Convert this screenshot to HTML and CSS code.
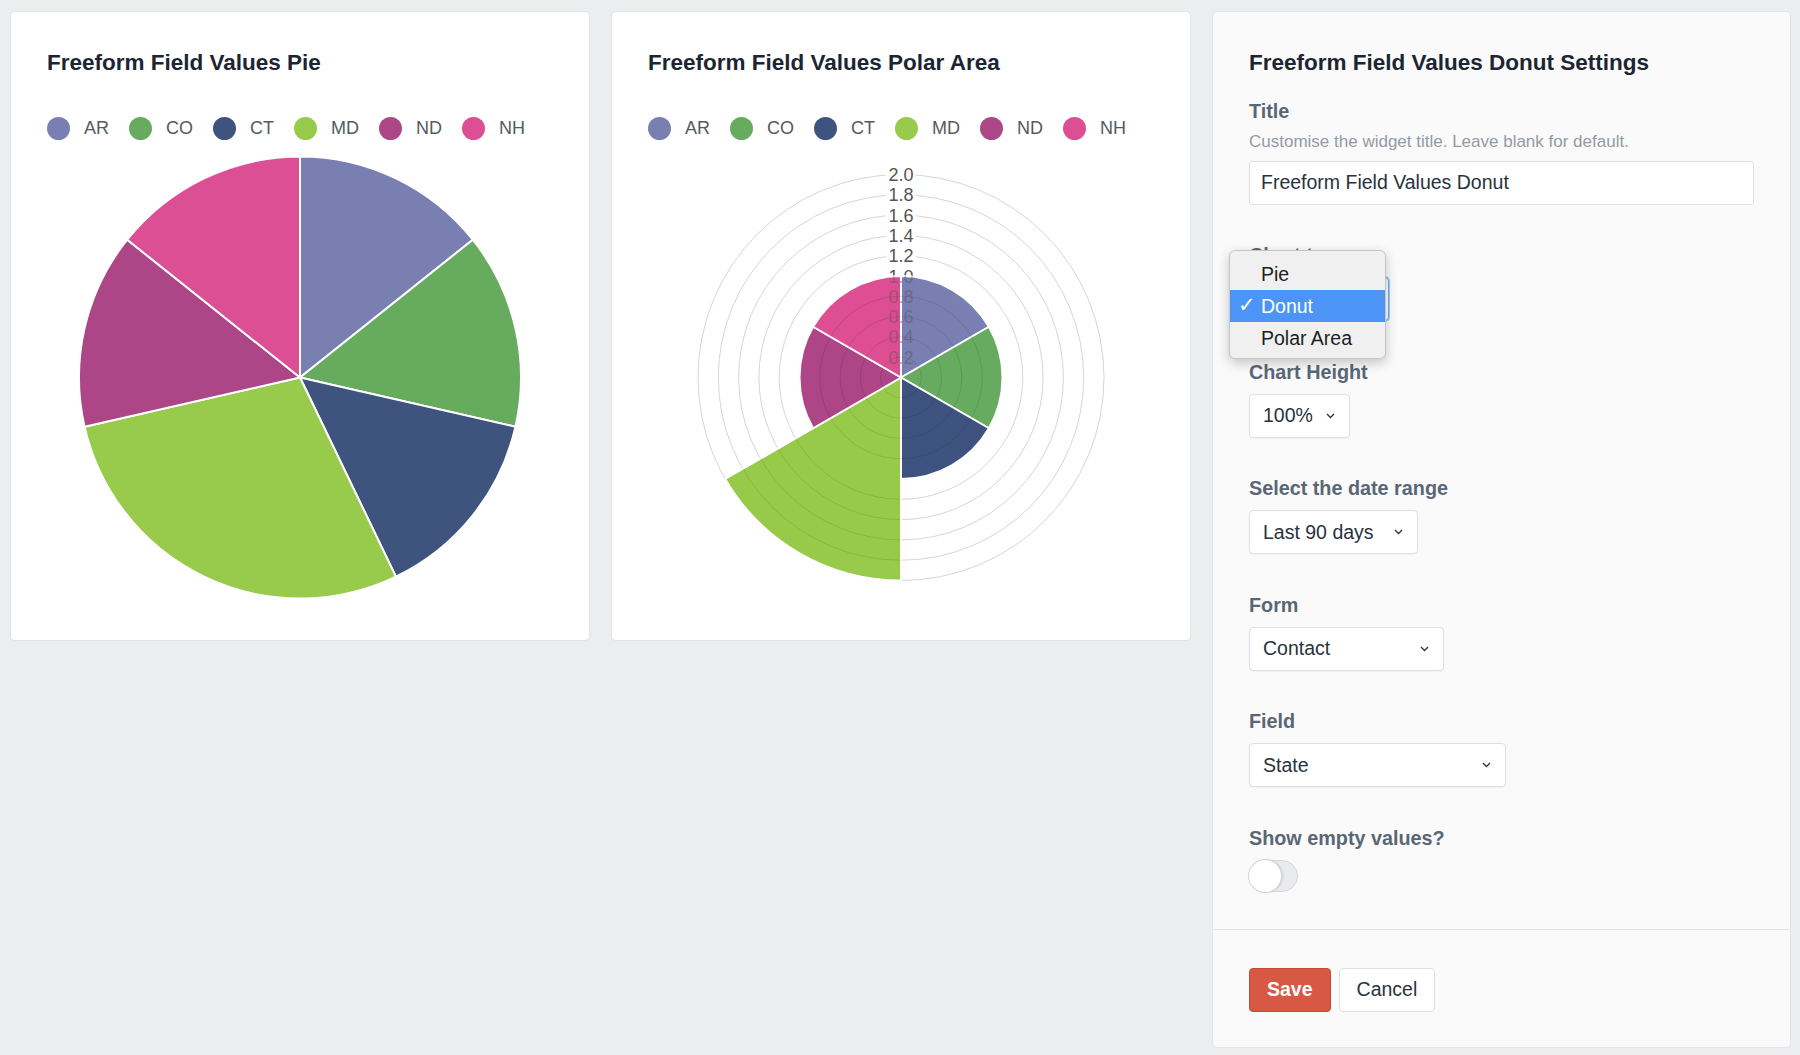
FILE: index.html
```html
<!DOCTYPE html>
<html lang="en">
<head>
<meta charset="utf-8">
<title>Freeform widgets</title>
<link rel="stylesheet" href="styles.css">
</head>
<body>
<div class="dashboard">

  <section class="card">
    <h2 class="card-title">Freeform Field Values Pie</h2>
    <ul class="legend">
      <li class="legend-item"><span class="swatch c-ar"></span><span class="legend-label">AR</span></li>
      <li class="legend-item"><span class="swatch c-co"></span><span class="legend-label">CO</span></li>
      <li class="legend-item"><span class="swatch c-ct"></span><span class="legend-label">CT</span></li>
      <li class="legend-item"><span class="swatch c-md"></span><span class="legend-label">MD</span></li>
      <li class="legend-item"><span class="swatch c-nd"></span><span class="legend-label">ND</span></li>
      <li class="legend-item"><span class="swatch c-nh"></span><span class="legend-label">NH</span></li>
    </ul>
    <svg class="chart" width="506" height="443" viewBox="0 0 506 443">
      <g stroke="#ffffff" stroke-width="2" stroke-linejoin="round">
        <path d="M253 221.5 L253 0.5 A221 221 0 0 1 425.78 83.71 Z" fill="#7a7fb2"/>
        <path d="M253 221.5 L425.78 83.71 A221 221 0 0 1 468.46 270.68 Z" fill="#67ab5f"/>
        <path d="M253 221.5 L468.46 270.68 A221 221 0 0 1 348.89 420.61 Z" fill="#3f537f"/>
        <path d="M253 221.5 L348.89 420.61 A221 221 0 0 1 37.54 270.68 Z" fill="#98ca4b"/>
        <path d="M253 221.5 L37.54 270.68 A221 221 0 0 1 80.22 83.71 Z" fill="#ad4686"/>
        <path d="M253 221.5 L80.22 83.71 A221 221 0 0 1 253 0.5 Z" fill="#dd4f94"/>
      </g>
    </svg>
  </section>

  <section class="card">
    <h2 class="card-title">Freeform Field Values Polar Area</h2>
    <ul class="legend">
      <li class="legend-item"><span class="swatch c-ar"></span><span class="legend-label">AR</span></li>
      <li class="legend-item"><span class="swatch c-co"></span><span class="legend-label">CO</span></li>
      <li class="legend-item"><span class="swatch c-ct"></span><span class="legend-label">CT</span></li>
      <li class="legend-item"><span class="swatch c-md"></span><span class="legend-label">MD</span></li>
      <li class="legend-item"><span class="swatch c-nd"></span><span class="legend-label">ND</span></li>
      <li class="legend-item"><span class="swatch c-nh"></span><span class="legend-label">NH</span></li>
    </ul>
    <svg class="chart" width="506" height="443" viewBox="0 0 506 443">
      <defs>
        <clipPath id="slice-clip">
          <path d="M253 221.5 L253 120 A101.5 101.5 0 0 1 340.90 170.75 Z"/>
          <path d="M253 221.5 L340.90 170.75 A101.5 101.5 0 0 1 340.90 272.25 Z"/>
          <path d="M253 221.5 L340.90 272.25 A101.5 101.5 0 0 1 253 323 Z"/>
          <path d="M253 221.5 L253 424.5 A203 203 0 0 1 77.20 323 Z"/>
          <path d="M253 221.5 L165.10 272.25 A101.5 101.5 0 0 1 165.10 170.75 Z"/>
          <path d="M253 221.5 L165.10 170.75 A101.5 101.5 0 0 1 253 120 Z"/>
        </clipPath>
      </defs>
      <g class="rings" fill="none" stroke="#d6d6d6" stroke-width="1">
        <circle cx="253" cy="221.5" r="20.3"/>
        <circle cx="253" cy="221.5" r="40.6"/>
        <circle cx="253" cy="221.5" r="60.9"/>
        <circle cx="253" cy="221.5" r="81.2"/>
        <circle cx="253" cy="221.5" r="101.5"/>
        <circle cx="253" cy="221.5" r="121.8"/>
        <circle cx="253" cy="221.5" r="142.1"/>
        <circle cx="253" cy="221.5" r="162.4"/>
        <circle cx="253" cy="221.5" r="182.7"/>
        <circle cx="253" cy="221.5" r="203"/>
      </g>
      <g class="tick-backdrops" fill="#ffffff">
        <rect x="238" y="193.2" width="30" height="16"/>
        <rect x="238" y="172.9" width="30" height="16"/>
        <rect x="238" y="152.6" width="30" height="16"/>
        <rect x="238" y="132.3" width="30" height="16"/>
        <rect x="238" y="112" width="30" height="16"/>
        <rect x="238" y="91.7" width="30" height="16"/>
        <rect x="238" y="71.4" width="30" height="16"/>
        <rect x="238" y="51.1" width="30" height="16"/>
        <rect x="238" y="30.8" width="30" height="16"/>
        <rect x="238" y="10.5" width="30" height="16"/>
      </g>
      <g class="ticks">
        <text x="253" y="207.7">0.2</text>
        <text x="253" y="187.4">0.4</text>
        <text x="253" y="167.1">0.6</text>
        <text x="253" y="146.8">0.8</text>
        <text x="253" y="126.5">1.0</text>
        <text x="253" y="106.2">1.2</text>
        <text x="253" y="85.9">1.4</text>
        <text x="253" y="65.6">1.6</text>
        <text x="253" y="45.3">1.8</text>
        <text x="253" y="25">2.0</text>
      </g>
      <g stroke="#ffffff" stroke-width="2" stroke-linejoin="round">
        <path d="M253 221.5 L253 120 A101.5 101.5 0 0 1 340.90 170.75 Z" fill="#7a7fb2"/>
        <path d="M253 221.5 L340.90 170.75 A101.5 101.5 0 0 1 340.90 272.25 Z" fill="#67ab5f"/>
        <path d="M253 221.5 L340.90 272.25 A101.5 101.5 0 0 1 253 323 Z" fill="#3f537f"/>
        <path d="M253 221.5 L253 424.5 A203 203 0 0 1 77.20 323 Z" fill="#98ca4b"/>
        <path d="M253 221.5 L165.10 272.25 A101.5 101.5 0 0 1 165.10 170.75 Z" fill="#ad4686"/>
        <path d="M253 221.5 L165.10 170.75 A101.5 101.5 0 0 1 253 120 Z" fill="#dd4f94"/>
      </g>
      <g class="show-through" clip-path="url(#slice-clip)">
        <g fill="none" stroke="#000000" stroke-width="1" opacity="0.1">
          <circle cx="253" cy="221.5" r="20.3"/>
          <circle cx="253" cy="221.5" r="40.6"/>
          <circle cx="253" cy="221.5" r="60.9"/>
          <circle cx="253" cy="221.5" r="81.2"/>
          <circle cx="253" cy="221.5" r="121.8"/>
          <circle cx="253" cy="221.5" r="142.1"/>
          <circle cx="253" cy="221.5" r="162.4"/>
          <circle cx="253" cy="221.5" r="182.7"/>
        </g>
        <g class="ticks" opacity="0.45">
          <text x="253" y="207.7">0.2</text>
          <text x="253" y="187.4">0.4</text>
          <text x="253" y="167.1">0.6</text>
          <text x="253" y="146.8">0.8</text>
          <text x="253" y="126.5">1.0</text>
        </g>
      </g>
    </svg>
  </section>

  <section class="card card-settings">
    <div class="settings-body">
      <h2 class="card-title">Freeform Field Values Donut Settings</h2>

      <div class="field">
        <label class="field-label">Title</label>
        <p class="field-help">Customise the widget title. Leave blank for default.</p>
        <input class="text-input" type="text" value="Freeform Field Values Donut">
      </div>

      <div class="field field-overlaid">
        <label class="field-label">Chart type</label>
        <div class="select select-type is-focused">
          <span class="select-value">Donut</span>
          <svg class="chevron" width="9" height="6" viewBox="0 0 9 6"><path d="M1 1 L4.5 4.5 L8 1" fill="none" stroke="#333" stroke-width="1.3"/></svg>
        </div>
        <div class="popup-menu">
          <div class="popup-item">Pie</div>
          <div class="popup-item is-selected"><span class="check">✓</span>Donut</div>
          <div class="popup-item">Polar Area</div>
        </div>
      </div>

      <div class="field">
        <label class="field-label">Chart Height</label>
        <div class="select select-height">
          <span class="select-value">100%</span>
          <svg class="chevron" width="9" height="6" viewBox="0 0 9 6"><path d="M1 1 L4.5 4.5 L8 1" fill="none" stroke="#333" stroke-width="1.3"/></svg>
        </div>
      </div>

      <div class="field">
        <label class="field-label">Select the date range</label>
        <div class="select select-range">
          <span class="select-value">Last 90 days</span>
          <svg class="chevron" width="9" height="6" viewBox="0 0 9 6"><path d="M1 1 L4.5 4.5 L8 1" fill="none" stroke="#333" stroke-width="1.3"/></svg>
        </div>
      </div>

      <div class="field">
        <label class="field-label">Form</label>
        <div class="select select-form">
          <span class="select-value">Contact</span>
          <svg class="chevron" width="9" height="6" viewBox="0 0 9 6"><path d="M1 1 L4.5 4.5 L8 1" fill="none" stroke="#333" stroke-width="1.3"/></svg>
        </div>
      </div>

      <div class="field">
        <label class="field-label">Field</label>
        <div class="select select-field">
          <span class="select-value">State</span>
          <svg class="chevron" width="9" height="6" viewBox="0 0 9 6"><path d="M1 1 L4.5 4.5 L8 1" fill="none" stroke="#333" stroke-width="1.3"/></svg>
        </div>
      </div>

      <div class="field field-last">
        <label class="field-label">Show empty values?</label>
        <div class="lightswitch"><span class="lightswitch-knob"></span></div>
      </div>
    </div>

    <div class="settings-footer">
      <button class="btn btn-submit" type="button">Save</button>
      <button class="btn btn-cancel" type="button">Cancel</button>
    </div>
  </section>

</div>
</body>
</html>
```

FILE: styles.css
```css
* {
  box-sizing: border-box;
}

html, body {
  margin: 0;
  padding: 0;
}

body {
  background: #ebedef;
  font-family: "Liberation Sans", Arial, Helvetica, sans-serif;
  color: #29323d;
  width: 1800px;
  height: 1055px;
  overflow: hidden;
}

.dashboard {
  display: grid;
  grid-template-columns: repeat(3, 1fr);
  column-gap: 21px;
  padding: 11px 9px 8px 10px;
  align-items: start;
}

.card {
  background: #ffffff;
  border: 1px solid #e2e4e7;
  border-radius: 5px;
  padding: 38px 36px 41px;
}

.card-title {
  margin: 0;
  font-size: 22.5px;
  line-height: 26px;
  font-weight: 700;
  color: #1c2531;
}

/* Legend */
.legend {
  list-style: none;
  margin: 41px 0 0;
  padding: 0;
  display: flex;
  align-items: center;
  height: 23px;
}

.legend-item {
  display: flex;
  align-items: center;
  margin-right: 20px;
}

.swatch {
  width: 23px;
  height: 23px;
  border-radius: 50%;
  margin-right: 14px;
}

.legend-label {
  font-size: 18px;
  line-height: 23px;
  color: #555a60;
}

.c-ar { background: #7a7fb2; }
.c-co { background: #67ab5f; }
.c-ct { background: #3f537f; }
.c-md { background: #98ca4b; }
.c-nd { background: #ad4686; }
.c-nh { background: #dd4f94; }

.chart {
  display: block;
  margin: 15.5px auto 0;
}

.ticks text {
  font-family: "Liberation Sans", Arial, sans-serif;
  font-size: 18px;
  fill: #555555;
  text-anchor: middle;
}

/* Settings card */
.card-settings {
  background: #fafafa;
  padding: 0;
}

.settings-body {
  padding: 38px 36px 37px;
}

.settings-body .card-title {
  margin-bottom: 22.5px;
}

.field {
  margin-bottom: 38.5px;
}

.field-last {
  margin-bottom: 0;
}

.field-overlaid {
  position: relative;
}

.field-label {
  display: block;
  font-size: 19.8px;
  line-height: 24px;
  font-weight: 700;
  color: #596775;
  margin-bottom: 10px;
}

.field-help {
  margin: -2px 0 0;
  font-size: 17px;
  line-height: 22px;
  color: #939ba5;
}

.text-input {
  display: block;
  width: 100%;
  height: 44px;
  margin-top: 8px;
  padding: 0 11px;
  border: 1px solid #dde0e4;
  border-radius: 3px;
  background: #ffffff;
  font-family: "Liberation Sans", Arial, sans-serif;
  font-size: 19.5px;
  color: #29323d;
}

.select {
  display: flex;
  align-items: center;
  justify-content: space-between;
  height: 44px;
  padding: 0 14px 0 13px;
  background: #ffffff;
  border: 1px solid #dde0e4;
  border-radius: 4px;
  box-shadow: 0 1px 1px rgba(0, 0, 0, 0.04);
  font-size: 19.5px;
  color: #29323d;
}

.select-type { width: 140px; }
.select-height { width: 101px; }
.select-range { width: 169px; }
.select-form { width: 195px; }
.select-field { width: 257px; }

.select.is-focused {
  border-color: #6fa8f5;
  box-shadow: 0 0 0 1px #a9cbf8;
}

.chevron {
  display: block;
  flex: none;
}

/* Native-looking popup menu */
.popup-menu {
  position: absolute;
  top: 6.5px;
  left: -20px;
  width: 157px;
  padding: 7px 0 4px;
  background: #f0f0f0;
  border: 1px solid #c6c6c6;
  border-radius: 6px;
  box-shadow: 0 4px 12px rgba(0, 0, 0, 0.22);
}

.popup-item {
  position: relative;
  height: 32px;
  line-height: 32px;
  padding-left: 31px;
  font-size: 19.5px;
  color: #1e1e1e;
}

.popup-item.is-selected {
  background: #4c95f6;
  color: #ffffff;
}

.check {
  position: absolute;
  left: 8px;
  top: -1px;
  font-family: "DejaVu Sans", sans-serif;
  font-size: 21px;
  font-weight: 700;
}

/* Lightswitch */
.lightswitch {
  display: flex;
  width: 49px;
  height: 32px;
  border: 1px solid #d4d8dc;
  border-radius: 16px;
  background: #e9ebee;
}

.lightswitch-knob {
  width: 32px;
  height: 32px;
  margin: -1px 0 0 -1px;
  border-radius: 50%;
  background: #ffffff;
  box-shadow: 0 0 0 1px #d0d4d9, 2px 0 3px rgba(0, 0, 0, 0.13);
}

/* Footer */
.settings-footer {
  display: flex;
  gap: 8px;
  border-top: 1px solid #e3e5e8;
  padding: 38px 36px 35px;
}

.btn {
  height: 44px;
  padding: 0 17px;
  border-radius: 4px;
  font-family: "Liberation Sans", Arial, sans-serif;
  font-size: 19.5px;
  cursor: pointer;
}

.btn-submit {
  background: #d75845;
  border: 1px solid #c64a38;
  color: #ffffff;
  font-weight: 700;
}

.btn-cancel {
  background: #ffffff;
  border: 1px solid #dde0e4;
  color: #29323d;
}
```
